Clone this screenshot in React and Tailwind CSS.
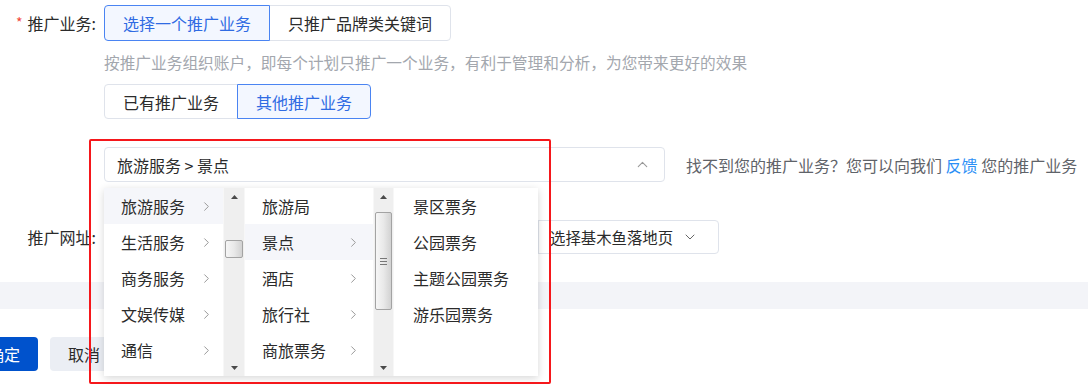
import { ChevronRight, ChevronUp, ChevronDown } from 'lucide-react';

const level1 = ['旅游服务', '生活服务', '商务服务', '文娱传媒', '通信'];
const level2 = [
  { name: '旅游局', more: false },
  { name: '景点', more: true },
  { name: '酒店', more: true },
  { name: '旅行社', more: true },
  { name: '商旅票务', more: true },
];
const level3 = ['景区票务', '公园票务', '主题公园票务', '游乐园票务'];

function Arrow({ down }) {
  return (
    <div className="h-[17px] flex items-center justify-center">
      <svg width="7" height="4" viewBox="0 0 7 4">
        {down ? (
          <polygon points="0,0 7,0 3.5,4" fill="#4a4a4a" />
        ) : (
          <polygon points="0,4 7,4 3.5,0" fill="#4a4a4a" />
        )}
      </svg>
    </div>
  );
}

function ScrollBar({ width, thumbTop, thumbHeight, grip }) {
  return (
    <div className={`${width} h-full flex flex-col bg-[#efefef] border-x border-[#f7f7f7]`}>
      <Arrow />
      <div className="flex-1 px-[1px]">
        <div
          className="rounded-[2px] border border-[#a3a3a3] bg-gradient-to-r from-[#f6f6f6] via-[#e9e9e9] to-[#d2d2d2] flex flex-col items-center justify-center gap-[2px]"
          style={{ marginTop: thumbTop, height: thumbHeight }}
        >
          {grip && (
            <>
              <div className="w-[7px] h-[1px] bg-[#777]" />
              <div className="w-[7px] h-[1px] bg-[#777]" />
              <div className="w-[7px] h-[1px] bg-[#777]" />
            </>
          )}
        </div>
      </div>
      <Arrow down />
    </div>
  );
}

function Cascader() {
  return (
    <div className="absolute left-0 top-[41px] h-[188px] flex bg-white shadow-[0_2px_8px_rgba(0,0,0,0.16)] z-10">
      <div className="w-[119px] flex flex-col">
        {level1.map((t, i) => (
          <div
            key={t}
            className={`h-9 flex items-center justify-between pl-[17px] pr-[9px] text-[16px] text-[#2b2b2b] ${
              i === 0 ? 'bg-[#f5f6fa]' : ''
            }`}
          >
            <span>{t}</span>
            <ChevronRight size={15} strokeWidth={1.6} color="#999" />
          </div>
        ))}
      </div>
      <ScrollBar width="w-[22px]" thumbTop={35} thumbHeight={18} />
      <div className="w-[128px] flex flex-col">
        {level2.map((it, i) => (
          <div
            key={it.name}
            className={`h-9 flex items-center justify-between pl-[17px] pr-[12px] text-[16px] text-[#2b2b2b] ${
              i === 1 ? 'bg-[#f5f6fa]' : ''
            }`}
          >
            <span>{it.name}</span>
            {it.more && <ChevronRight size={15} strokeWidth={1.6} color="#999" />}
          </div>
        ))}
      </div>
      <ScrollBar width="w-[21px]" thumbTop={7} thumbHeight={98} grip />
      <div className="w-[143px] flex flex-col ml-[1px]">
        {level3.map((t) => (
          <div key={t} className="h-9 flex items-center pl-[18px] text-[16px] text-[#2b2b2b]">
            {t}
          </div>
        ))}
      </div>
    </div>
  );
}

function SegButton({ active, first, children, h }) {
  return (
    <div
      className={`${h} px-[18px] flex items-center text-[16px] border ${
        first ? 'rounded-l-[4px]' : 'rounded-r-[4px] -ml-[1px]'
      } ${
        active
          ? 'border-[#4a84f2] bg-[#f3f7ff] text-[#2f6be3] z-[1]'
          : 'border-[#dfe3eb] bg-white text-[#2b2b2b]'
      }`}
    >
      {children}
    </div>
  );
}

export default function App() {
  return (
    <div className="relative w-[1088px] h-[390px] overflow-hidden bg-white font-['Noto_Sans_CJK_SC','Microsoft_YaHei',sans-serif] leading-5">
      <div className="pt-[5px]">
        <div className="flex items-center">
          <div className="w-[96px] flex justify-end items-center text-[16px] text-[#2b2b2b]">
            <span className="text-[#f2483a] text-[14px] mr-[5px] -mt-[3px]">*</span>
            <span>推广业务:</span>
          </div>
          <div className="ml-2 flex relative">
            <SegButton active first h="h-9">选择一个推广业务</SegButton>
            <SegButton h="h-9">只推广品牌类关键词</SegButton>
          </div>
        </div>

        <div className="ml-[104px] mt-[12px] text-[15.7px] text-[#a3a7ae]">
          按推广业务组织账户，即每个计划只推广一个业务，有利于管理和分析，为您带来更好的效果
        </div>

        <div className="ml-[104px] mt-[11px] flex">
          <SegButton first h="h-[35px]">已有推广业务</SegButton>
          <SegButton active h="h-[35px]">其他推广业务</SegButton>
        </div>

        <div className="ml-[104px] mt-[28px] flex items-center">
          <div className="relative">
            <div className="w-[561px] h-[35px] border border-[#dfe3eb] rounded-[4px] flex items-center justify-between pl-[12px] pr-[13px] text-[16px] text-[#2b2b2b]">
              <span>旅游服务 &gt; 景点</span>
              <ChevronUp size={17} strokeWidth={1.5} color="#999" />
            </div>
            <Cascader />
          </div>
          <div className="ml-[21px] text-[16px] text-[#5f6369]">
            找不到您的推广业务？您可以向我们 <span className="text-[#2b8ff6]">反馈</span> 您的推广业务
          </div>
        </div>

        <div className="mt-[38px] flex items-center">
          <div className="w-[96px] flex justify-end text-[16px] text-[#2b2b2b]">推广网址:</div>
          <div className="ml-2 h-[34px] flex border border-[#dfe3eb] rounded-[4px]">
            <div className="w-[433px]" />
            <div className="w-[180px] flex items-center justify-between pl-[11px] pr-[20px] text-[15.4px] text-[#2b2b2b] border-l border-[#dfe3eb]">
              <span>选择基木鱼落地页</span>
              <ChevronDown size={16} strokeWidth={1.5} color="#666" />
            </div>
          </div>
        </div>
      </div>

      <div className="mt-[28px] h-[27px] bg-[#f3f4f8]" />

      <div className="mt-[28px] -ml-[30px] flex gap-3">
        <div className="w-[68px] h-[34px] rounded-[4px] bg-[#0052cc] text-white text-[16px] flex items-center justify-center">
          确定
        </div>
        <div className="w-[68px] h-[34px] rounded-[4px] bg-[#ebeef4] text-[#2b2b2b] text-[16px] flex items-center justify-center">
          取消
        </div>
      </div>

      <div className="absolute left-[89px] top-[139px] w-[462px] h-[245px] border-2 border-[#f5171b] rounded-[2px] z-20 pointer-events-none" />
    </div>
  );
}
